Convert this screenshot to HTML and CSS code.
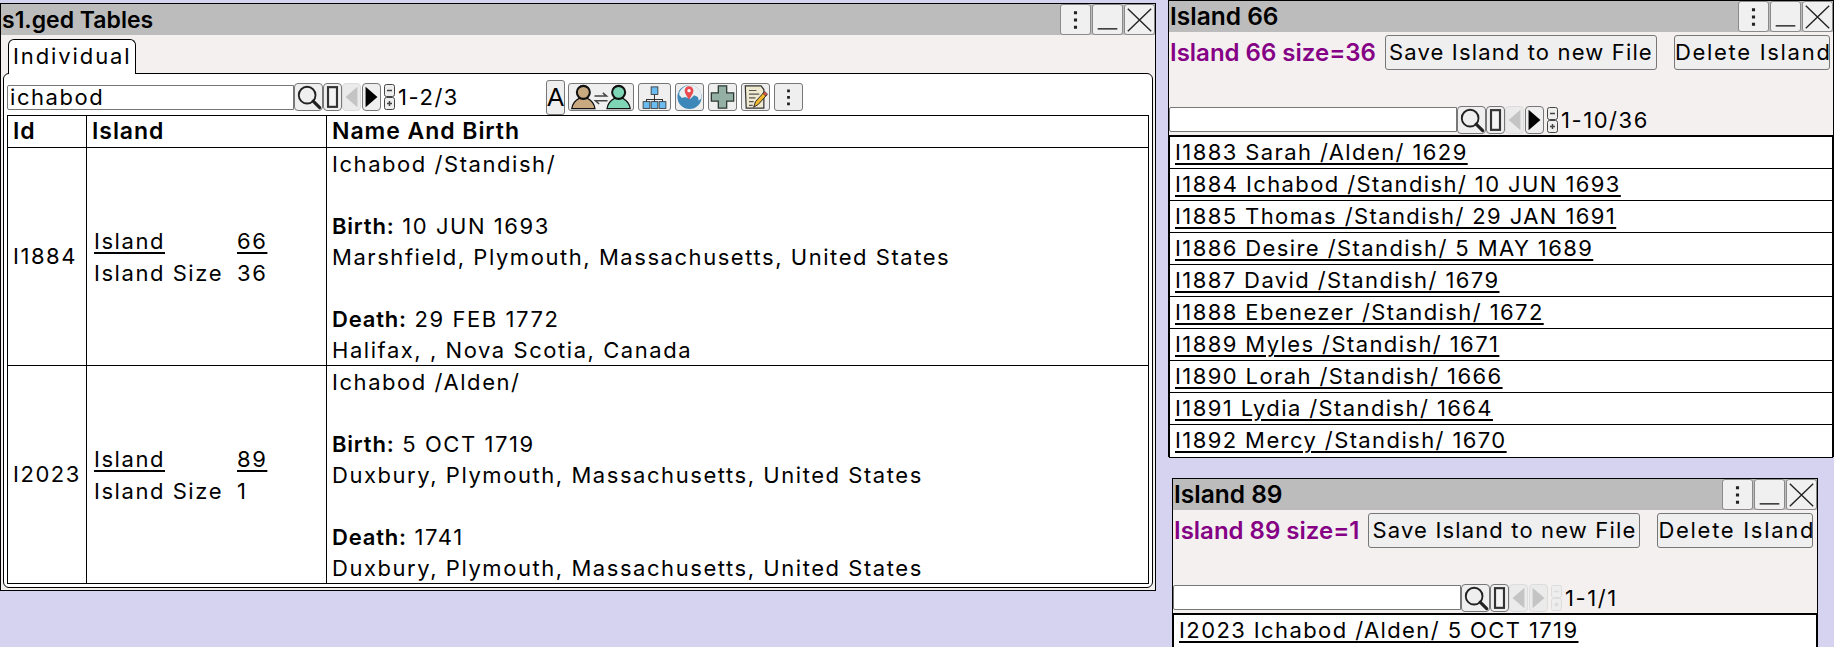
FILE: index.html
```html
<!DOCTYPE html>
<html lang="en">
<head>
<meta charset="utf-8">
<title>s1.ged Tables</title>
<link rel="stylesheet" href="styles.css">
</head>
<body>
<svg class="defs" width="0" height="0" aria-hidden="true">
  <symbol id="i-search" viewBox="0 0 28 28"><circle cx="12" cy="12" r="9" fill="none" stroke="#222" stroke-width="2"/><path d="M18.500 18.500l7 7" stroke="#222" stroke-width="3.400" stroke-linecap="round"/></symbol>
  <symbol id="i-box" viewBox="0 0 19 28"><rect x="4.500" y="3" width="10" height="22" fill="#f4f4f4" stroke="#333" stroke-width="2.400"/></symbol>
  <symbol id="i-prev" viewBox="0 0 20 28"><path d="M17 2v24L3 14z" fill="currentColor"/></symbol>
  <symbol id="i-next" viewBox="0 0 20 28"><path d="M3 2v24l14-12z" fill="currentColor"/></symbol>
  <symbol id="i-pm" viewBox="0 0 11 26"><rect x=".5" y=".5" width="10" height="12" rx="2" fill="#eee" stroke="currentColor"/><rect x=".5" y="13.5" width="10" height="12" rx="2" fill="#eee" stroke="currentColor"/><path d="M3 6.500h5M3 19.500h5M5.500 17v5" stroke="currentColor" stroke-width="1.500"/></symbol>
  <symbol id="i-dots" viewBox="0 0 28 28"><path d="M14 6v3M14 13v3M14 20v3" stroke="#222" stroke-width="3"/></symbol>
  <symbol id="i-min" viewBox="0 0 31 31"><path d="M5 25.500h21" stroke="#222" stroke-width="1.500"/></symbol>
  <symbol id="i-close" viewBox="0 0 31 31"><path d="M3 4l25 24M28 4L3 28" stroke="#222" stroke-width="1.500"/></symbol>
  <symbol id="i-persons" viewBox="0 0 66 28">
    <path d="M1.500 26.500c1-6 4-9 8-11h9c4 2 7 5 8 11z" fill="#c9aa80" stroke="#111" stroke-width="1.300"/>
    <circle cx="14" cy="9" r="7" fill="#c9aa80" stroke="#111" stroke-width="2.200"/>
    <path d="M39.500 26.500c1-6 4-9 8-11h9c4 2 7 5 8 11z" fill="#7fd6b6" stroke="#111" stroke-width="1.300"/>
    <circle cx="52" cy="9" r="7" fill="#7fd6b6" stroke="#111" stroke-width="2.200"/>
    <path d="M26 13h13l-4-3.500M40 18H27l4 3.500" fill="none" stroke="#444" stroke-width="1.600"/>
  </symbol>
  <symbol id="i-tree" viewBox="0 0 32 28">
    <path d="M16 11v6M6.500 20v-3h19v3M16 17v3" fill="none" stroke="#333" stroke-width="1.200"/>
    <rect x="12" y="2" width="8" height="9" fill="#6bbcf0" stroke="#333"/>
    <rect x="2.500" y="19.500" width="8" height="8" fill="#6bbcf0" stroke="#333"/>
    <rect x="12" y="19.500" width="8" height="8" fill="#6bbcf0" stroke="#333"/>
    <rect x="21.500" y="19.500" width="8" height="8" fill="#6bbcf0" stroke="#333"/>
  </symbol>
  <symbol id="i-map" viewBox="0 0 28 28">
    <circle cx="14" cy="14" r="13" fill="#3d88b8"/>
    <path d="M3 9c3-5 7-8 11-8s9 2 12 7l1 7-3 3-1-4-4-2-4 4-6-2-3 1-3-3z" fill="#e9eef0"/>
    <path d="M13.500 2.500c-2.700 0-4.700 2.100-4.700 4.700 0 3.300 4.700 9.300 4.700 9.300s4.700-6 4.700-9.300c0-2.600-2-4.700-4.700-4.700z" fill="#ea4a50"/>
    <circle cx="13.500" cy="7.200" r="1.800" fill="#fff"/>
  </symbol>
  <symbol id="i-plus" viewBox="0 0 28 28"><path d="M9.500 2h9v7.500H26v9h-7.500V26h-9v-7.500H2v-9h7.500z" fill="#94afa3" stroke="#2f3a36" stroke-width="1.400"/></symbol>
  <symbol id="i-note" viewBox="0 0 28 28">
    <path d="M3 2h17l3 4v20H4z" fill="#efe9cf" stroke="#333" stroke-width="1.300"/>
    <path d="M7 7h8M7 11h11M7 15h7M7 19h5M7 23h4" stroke="#555" stroke-width="1.300"/>
    <path d="M12 25l2-6 9-10 3 3-9 10z" fill="#f0b72f" stroke="#222"/>
    <path d="M22 10l2-2 3 3-2 2z" fill="#d9544f" stroke="#222" stroke-width=".7"/>
  </symbol>
</svg>

<main class="desktop">
  <section class="window win-tables">
    <header class="titlebar title-tall">
      <h1 class="title">s1.ged Tables</h1>
      <div class="win-ctrls">
        <button class="ctrl"><svg class="ic-ctrl"><use href="#i-dots"/></svg></button>
        <button class="ctrl"><svg class="ic-ctrl"><use href="#i-min"/></svg></button>
        <button class="ctrl"><svg class="ic-ctrl"><use href="#i-close"/></svg></button>
      </div>
    </header>
    <div class="tabstrip"><span class="tab">Individual</span></div>
    <div class="tabpanel">
      <div class="toolbar">
        <input class="search" type="text" value="ichabod">
        <button class="tb tb-search"><svg class="ic-search"><use href="#i-search"/></svg></button>
        <button class="tb tb-box"><svg class="ic-box"><use href="#i-box"/></svg></button>
        <button class="tb tb-nav off"><svg class="ic-nav"><use href="#i-prev"/></svg></button>
        <button class="tb tb-nav"><svg class="ic-nav"><use href="#i-next"/></svg></button>
        <svg class="ic-pm"><use href="#i-pm"/></svg>
        <span class="count count-main">1-2/3</span>
        <div class="tools">
          <button class="tool tool-a">A</button>
          <button class="tool tool-persons"><svg class="ic-persons"><use href="#i-persons"/></svg></button>
          <button class="tool tool-tree"><svg class="ic-tool"><use href="#i-tree"/></svg></button>
          <button class="tool"><svg class="ic-tool"><use href="#i-map"/></svg></button>
          <button class="tool"><svg class="ic-tool"><use href="#i-plus"/></svg></button>
          <button class="tool"><svg class="ic-tool"><use href="#i-note"/></svg></button>
          <button class="tool"><svg class="ic-tool"><use href="#i-dots"/></svg></button>
        </div>
      </div>
      <table class="grid">
        <colgroup><col class="col-id"><col class="col-island"><col></colgroup>
        <thead><tr><th>Id</th><th>Island</th><th>Name And Birth</th></tr></thead>
        <tbody>
          <tr>
            <td>I1884</td>
            <td>
              <div class="island-info">
                <a href="#">Island</a><a href="#">66</a>
                <span>Island Size</span><span>36</span>
              </div>
            </td>
            <td><div class="person">Ichabod /Standish/<br><br><b>Birth:</b> 10 JUN 1693<br>Marshfield, Plymouth, Massachusetts, United States<br><br><b>Death:</b> 29 FEB 1772<br>Halifax, , Nova Scotia, Canada</div></td>
          </tr>
          <tr>
            <td>I2023</td>
            <td>
              <div class="island-info">
                <a href="#">Island</a><a href="#">89</a>
                <span>Island Size</span><span>1</span>
              </div>
            </td>
            <td><div class="person">Ichabod /Alden/<br><br><b>Birth:</b> 5 OCT 1719<br>Duxbury, Plymouth, Massachusetts, United States<br><br><b>Death:</b> 1741<br>Duxbury, Plymouth, Massachusetts, United States</div></td>
          </tr>
        </tbody>
      </table>
    </div>
  </section>

  <section class="window win-island66">
    <header class="titlebar">
      <h2 class="title">Island 66</h2>
      <div class="win-ctrls">
        <button class="ctrl"><svg class="ic-ctrl"><use href="#i-dots"/></svg></button>
        <button class="ctrl"><svg class="ic-ctrl"><use href="#i-min"/></svg></button>
        <button class="ctrl"><svg class="ic-ctrl"><use href="#i-close"/></svg></button>
      </div>
    </header>
    <div class="actions">
      <strong class="size">Island 66 size=36</strong>
      <button class="btn btn-save">Save Island to new File</button>
      <button class="btn btn-del">Delete Island</button>
    </div>
    <div class="toolbar toolbar-island">
      <input class="search" type="text">
      <button class="tb tb-search"><svg class="ic-search"><use href="#i-search"/></svg></button>
      <button class="tb tb-box"><svg class="ic-box"><use href="#i-box"/></svg></button>
      <button class="tb tb-nav off"><svg class="ic-nav"><use href="#i-prev"/></svg></button>
      <button class="tb tb-nav"><svg class="ic-nav"><use href="#i-next"/></svg></button>
      <svg class="ic-pm"><use href="#i-pm"/></svg>
      <span class="count">1-10/36</span>
    </div>
    <ul class="list">
      <li><a href="#">I1883 Sarah /Alden/ 1629</a></li>
      <li><a href="#">I1884 Ichabod /Standish/ 10 JUN 1693</a></li>
      <li><a href="#">I1885 Thomas /Standish/ 29 JAN 1691</a></li>
      <li><a href="#">I1886 Desire /Standish/ 5 MAY 1689</a></li>
      <li><a href="#">I1887 David /Standish/ 1679</a></li>
      <li><a href="#">I1888 Ebenezer /Standish/ 1672</a></li>
      <li><a href="#">I1889 Myles /Standish/ 1671</a></li>
      <li><a href="#">I1890 Lorah /Standish/ 1666</a></li>
      <li><a href="#">I1891 Lydia /Standish/ 1664</a></li>
      <li><a href="#">I1892 Mercy /Standish/ 1670</a></li>
    </ul>
  </section>

  <section class="window win-island89">
    <header class="titlebar">
      <h2 class="title">Island 89</h2>
      <div class="win-ctrls">
        <button class="ctrl"><svg class="ic-ctrl"><use href="#i-dots"/></svg></button>
        <button class="ctrl"><svg class="ic-ctrl"><use href="#i-min"/></svg></button>
        <button class="ctrl"><svg class="ic-ctrl"><use href="#i-close"/></svg></button>
      </div>
    </header>
    <div class="actions">
      <strong class="size">Island 89 size=1</strong>
      <button class="btn btn-save">Save Island to new File</button>
      <button class="btn btn-del">Delete Island</button>
    </div>
    <div class="toolbar toolbar-island">
      <input class="search" type="text">
      <button class="tb tb-search"><svg class="ic-search"><use href="#i-search"/></svg></button>
      <button class="tb tb-box"><svg class="ic-box"><use href="#i-box"/></svg></button>
      <button class="tb tb-nav off"><svg class="ic-nav"><use href="#i-prev"/></svg></button>
      <button class="tb tb-nav off"><svg class="ic-nav"><use href="#i-next"/></svg></button>
      <svg class="ic-pm off"><use href="#i-pm"/></svg>
      <span class="count">1-1/1</span>
    </div>
    <ul class="list">
      <li><a href="#">I2023 Ichabod /Alden/ 5 OCT 1719</a></li>
    </ul>
  </section>
</main>
</body>
</html>
```

FILE: styles.css
```css
* { box-sizing: border-box; }
html, body { margin: 0; height: 100%; }
body {
  background: #d6d3f1;
  color: #000;
  font-family: "Inter", "Liberation Sans", sans-serif;
  font-size: 22px;
  letter-spacing: 1.55px;
  overflow: hidden;
}
.defs { position: absolute; }
.desktop { position: relative; width: 1834px; height: 647px; }
.window {
  position: absolute;
  background: #f3f0ef;
  border: 1px solid #000;
  display: flex;
  flex-direction: column;
}
.win-tables { left: 0; top: 3px; width: 1156px; height: 588px; padding-bottom: 2px; }
.win-island66 { left: 1168px; top: 0; width: 666px; height: 457px; }
.win-island89 { left: 1172px; top: 478px; width: 646px; height: 169px; }

.titlebar {
  flex: none;
  height: 31px;
  background: #bcbcbc;
  display: flex;
  align-items: center;
  justify-content: space-between;
}
.title { margin: 0; padding: 2px 0 0 1px; font-size: 23px; font-weight: 600; letter-spacing: 0; line-height: 29px; }
h2.title { font-size: 24.5px; padding-top: 0; }
.win-ctrls { display: flex; align-self: stretch; gap: 1px; }
.ctrl {
  width: 31px;
  padding: 0;
  background: #f0f0f0;
  border: 1px solid #8a8a8a;
  border-radius: 3px;
  display: flex;
  align-items: center;
  justify-content: center;
}
.ic-ctrl { width: 29px; height: 29px; }

.tabstrip { flex: none; height: 38px; padding: 4px 0 0 7px; display: flex; }
.tab {
  width: 128px;
  background: #fff;
  border: 1px solid #000;
  border-bottom: 0;
  border-radius: 6px 6px 0 0;
  padding-left: 4px;
  line-height: 32px;
  margin-bottom: -1px;
  position: relative;
  letter-spacing: 1.9px;
}
.tabpanel {
  flex: 1;
  margin: 0 2px 0 2px;
  background: #fff;
  border: 1px solid #000;
  border-radius: 6px;
  padding: 5px 3px 3px;
  display: flex;
  flex-direction: column;
}
.toolbar { display: flex; align-items: center; height: 36px; flex: none; }
.toolbar .search {
  width: 287px;
  height: 25px;
  border: 1px solid #777;
  border-radius: 2px 0 0 2px;
  background: #fff;
  font: inherit;
  letter-spacing: inherit;
  padding: 0 2px;
  margin: 0;
}
.tb {
  height: 28px;
  padding: 0;
  background: #efefef;
  border: 1px solid #777;
  border-radius: 4px;
  display: flex;
  align-items: center;
  justify-content: center;
}
.tb-search { width: 29px; }
.tb-box { width: 19px; }
.tb-nav { width: 19px; color: #000; }
.tb-nav + .tb-nav { margin-left: 1px; }
.tb-nav.off { color: #c4c4c4; border-color: #dcdcdc; background: #ebebeb; }
.ic-search { width: 26px; height: 26px; }
.ic-box { width: 17px; height: 26px; }
.ic-nav { width: 17px; height: 26px; }
.ic-pm { width: 11px; height: 26px; margin: 0 3px 0 3px; flex: none; color: #444; }
.ic-pm.off { color: #d0d0d0; opacity: 0.6; }
.count { white-space: nowrap; }
.count-main { width: 148px; }
.tools { display: flex; align-items: center; gap: 4px; }
.tool {
  width: 29px;
  height: 28px;
  padding: 0;
  background: #efefef;
  border: 1px solid #777;
  border-radius: 3px;
  display: flex;
  align-items: center;
  justify-content: center;
  font-family: "Liberation Sans", sans-serif;
  color: #000;
}
.tool-a { width: 19px; height: 35px; font-size: 25px; margin-right: -1px; letter-spacing: 0; }
.tool-persons { width: 66px; }
.tool-tree { width: 33px; }
.ic-tool { width: 27px; height: 26px; }
.ic-persons { width: 64px; height: 26px; }

.grid {
  border-collapse: collapse;
  width: 100%;
  flex: none;
  background: #fff;
  table-layout: fixed;
}
.col-id { width: 79px; }
.col-island { width: 240px; }
.grid th, .grid td {
  border: 1px solid #000;
  padding: 0 5px;
  line-height: 31px;
  text-align: left;
}
.grid th { font-weight: 600; letter-spacing: 0.95px; font-size: 23px; }
.grid b { font-weight: 600; letter-spacing: 0.8px; }
.person { margin: 1px 0 -1px; }
a { color: inherit; text-decoration: underline; text-decoration-thickness: 2px; text-underline-offset: 3px; }
.island-info {
  display: grid;
  grid-template-columns: 143px auto;
  line-height: 32px;
  margin-left: 2px;
}

.actions { flex: none; display: flex; align-items: center; height: 38px; padding: 2px 0 0 1px; }
.size { color: #850085; font-weight: 600; letter-spacing: 0; font-size: 24px; white-space: nowrap; }
.btn {
  height: 35px;
  padding: 0;
  background: #efefef;
  border: 1px solid #777;
  border-radius: 3px;
  font: inherit;
  color: #000;
  white-space: nowrap;
}
.btn-save { width: 272px; letter-spacing: 1.15px; margin-left: 9px; }
.btn-del { width: 156px; letter-spacing: 1.7px; margin-left: 17px; }
.toolbar-island { margin-top: 35px; height: 29px; }
.toolbar-island .search { width: 288px; }
.list {
  list-style: none;
  margin: 0;
  padding: 0;
  flex: 1;
  background: #fff;
  border: 1px solid #000;
  margin-top: 1px;
  border-width: 2px 1px 1px;
  letter-spacing: 1.4px;
}
.list li {
  height: 32px;
  line-height: 31px;
  padding-left: 5px;
  border-bottom: 1px solid #000;
  white-space: nowrap;
}
.list li:last-child { border-bottom: 0; }
```
